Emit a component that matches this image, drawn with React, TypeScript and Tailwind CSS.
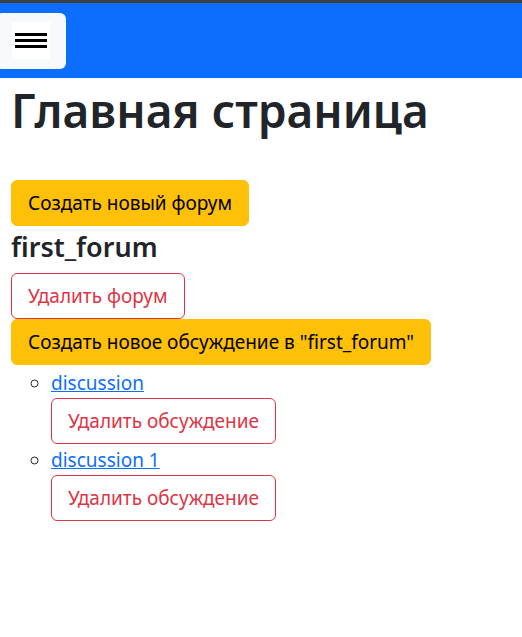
import { useState } from 'react';

const discussions = ['discussion', 'discussion 1'];

export default function App() {
  const [open, setOpen] = useState(false);

  return (
    <div className="min-h-[637px] bg-white text-[#212529] font-['Noto_Sans','Open_Sans',sans-serif]">
      {/* navbar */}
      <div className="border-t-[3px] border-[#404040] bg-[#0d6efd] h-[78px] flex items-center">
        <button
          onClick={() => setOpen(!open)}
          className="ml-[-4px] w-[70px] h-[56px] bg-[#f8f9fa] rounded-[6px] flex items-center justify-center"
        >
          <span className="w-[38px] h-[37px] bg-white flex flex-col items-center justify-center gap-[3px]">
            <span className="block w-[32px] h-[3px] bg-black" />
            <span className="block w-[32px] h-[3px] bg-black" />
            <span className="block w-[32px] h-[3px] bg-black" />
          </span>
        </button>
      </div>

      <div className="px-[11px]">
        <h1 className="text-[46px] leading-[1.25] font-semibold mt-[4px] mb-[40px]">Главная страница</h1>

        <button className="block bg-[#ffc107] text-black text-[19px] leading-[30px] px-[16px] py-[7px] rounded-[6px] border border-[#ffc107]">
          Создать новый форум
        </button>

        <h3 className="text-[27px] leading-[1.25] font-semibold mt-[4px] mb-[10px]">first_forum</h3>

        <button className="block border border-[#dc3545] text-[#dc3545] text-[19px] leading-[30px] px-[16px] py-[7px] rounded-[6px]">
          Удалить форум
        </button>
        <button className="block bg-[#ffc107] text-black text-[19px] leading-[30px] px-[16px] py-[7px] rounded-[6px] border border-[#ffc107]">
          Создать новое обсуждение в "first_forum"
        </button>

        <ul className="list-[circle] pl-[40px] mt-[3px] text-[19px] leading-[30px]">
          {discussions.map((d) => (
            <li key={d} className="mb-[1px]">
              <a href="#" className="text-[#0d6efd] underline">{d}</a>
              <button className="block border border-[#dc3545] text-[#dc3545] text-[19px] leading-[30px] px-[16px] py-[7px] rounded-[6px]">
                Удалить обсуждение
              </button>
            </li>
          ))}
        </ul>
      </div>
    </div>
  );
}
